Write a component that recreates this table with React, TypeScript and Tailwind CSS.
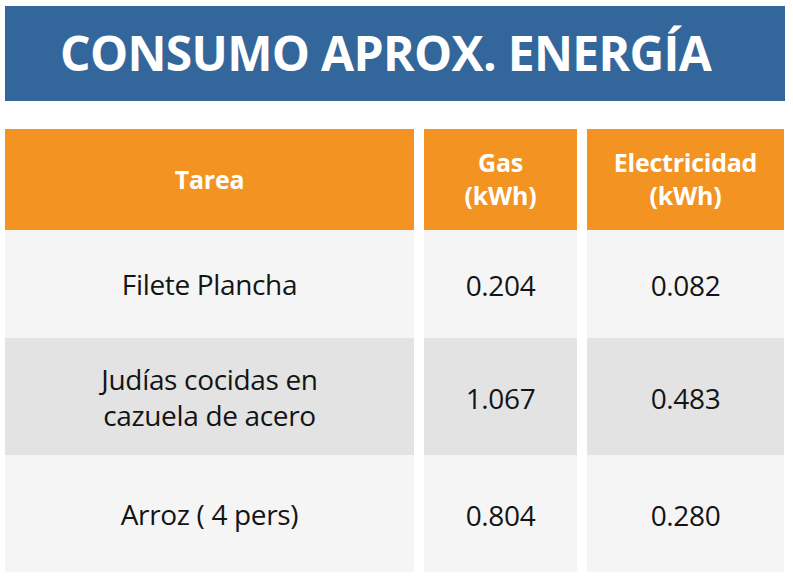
import React from "react";

const rows = [
  { tarea: ["Filete Plancha"], gas: "0.204", elec: "0.082", bg: "bg-[#f5f5f5]", h: "h-[108px]" },
  { tarea: ["Judías cocidas en", "cazuela de acero"], gas: "1.067", elec: "0.483", bg: "bg-[#e3e3e3]", h: "h-[117px]" },
  { tarea: ["Arroz ( 4 pers)"], gas: "0.804", elec: "0.280", bg: "bg-[#f5f5f5]", h: "h-[117px]" },
];

export default function App() {
  return (
    <div
      className="w-[793px] h-[585px] bg-white pt-[6px] px-[5px] overflow-hidden"
      style={{ fontFamily: '"Open Sans", "Noto Sans", sans-serif' }}
    >
      <div className="w-[780px] h-[95px] bg-[#33679c] flex items-center pl-[55px]">
        <h1 className="text-white font-bold text-[48px] leading-none tracking-[-0.014em] pb-[2px]">
          CONSUMO APROX. ENERGÍA
        </h1>
      </div>

      <div className="mt-[28px] grid grid-cols-[409px_153px_197px] gap-x-[10px]">
        <div className="h-[101px] bg-[#f39322] flex items-center justify-center text-white font-bold text-[25px] leading-[33px] tracking-[-0.01em]">
          Tarea
        </div>
        <div className="h-[101px] bg-[#f39322] flex flex-col items-center justify-center text-white font-bold text-[25px] leading-[33px] tracking-[-0.01em] pb-[2px]">
          <span>Gas</span>
          <span>(kWh)</span>
        </div>
        <div className="h-[101px] bg-[#f39322] flex flex-col items-center justify-center text-white font-bold text-[25px] leading-[33px] tracking-[-0.01em] pb-[2px]">
          <span>Electricidad</span>
          <span>(kWh)</span>
        </div>

        {rows.map((r, i) => (
          <React.Fragment key={i}>
            <div className={`${r.h} ${r.bg} flex flex-col items-center justify-center text-[#141414] text-[28px] leading-[36px] tracking-[-0.012em]`}>
              {r.tarea.map((t, j) => (
                <span key={j}>{t}</span>
              ))}
            </div>
            <div className={`${r.h} ${r.bg} flex items-center justify-center text-[#141414] text-[28px] tracking-[-0.012em] pt-[2px]`}>
              {r.gas}
            </div>
            <div className={`${r.h} ${r.bg} flex items-center justify-center text-[#141414] text-[28px] tracking-[-0.012em] pt-[2px]`}>
              {r.elec}
            </div>
          </React.Fragment>
        ))}
      </div>
    </div>
  );
}
